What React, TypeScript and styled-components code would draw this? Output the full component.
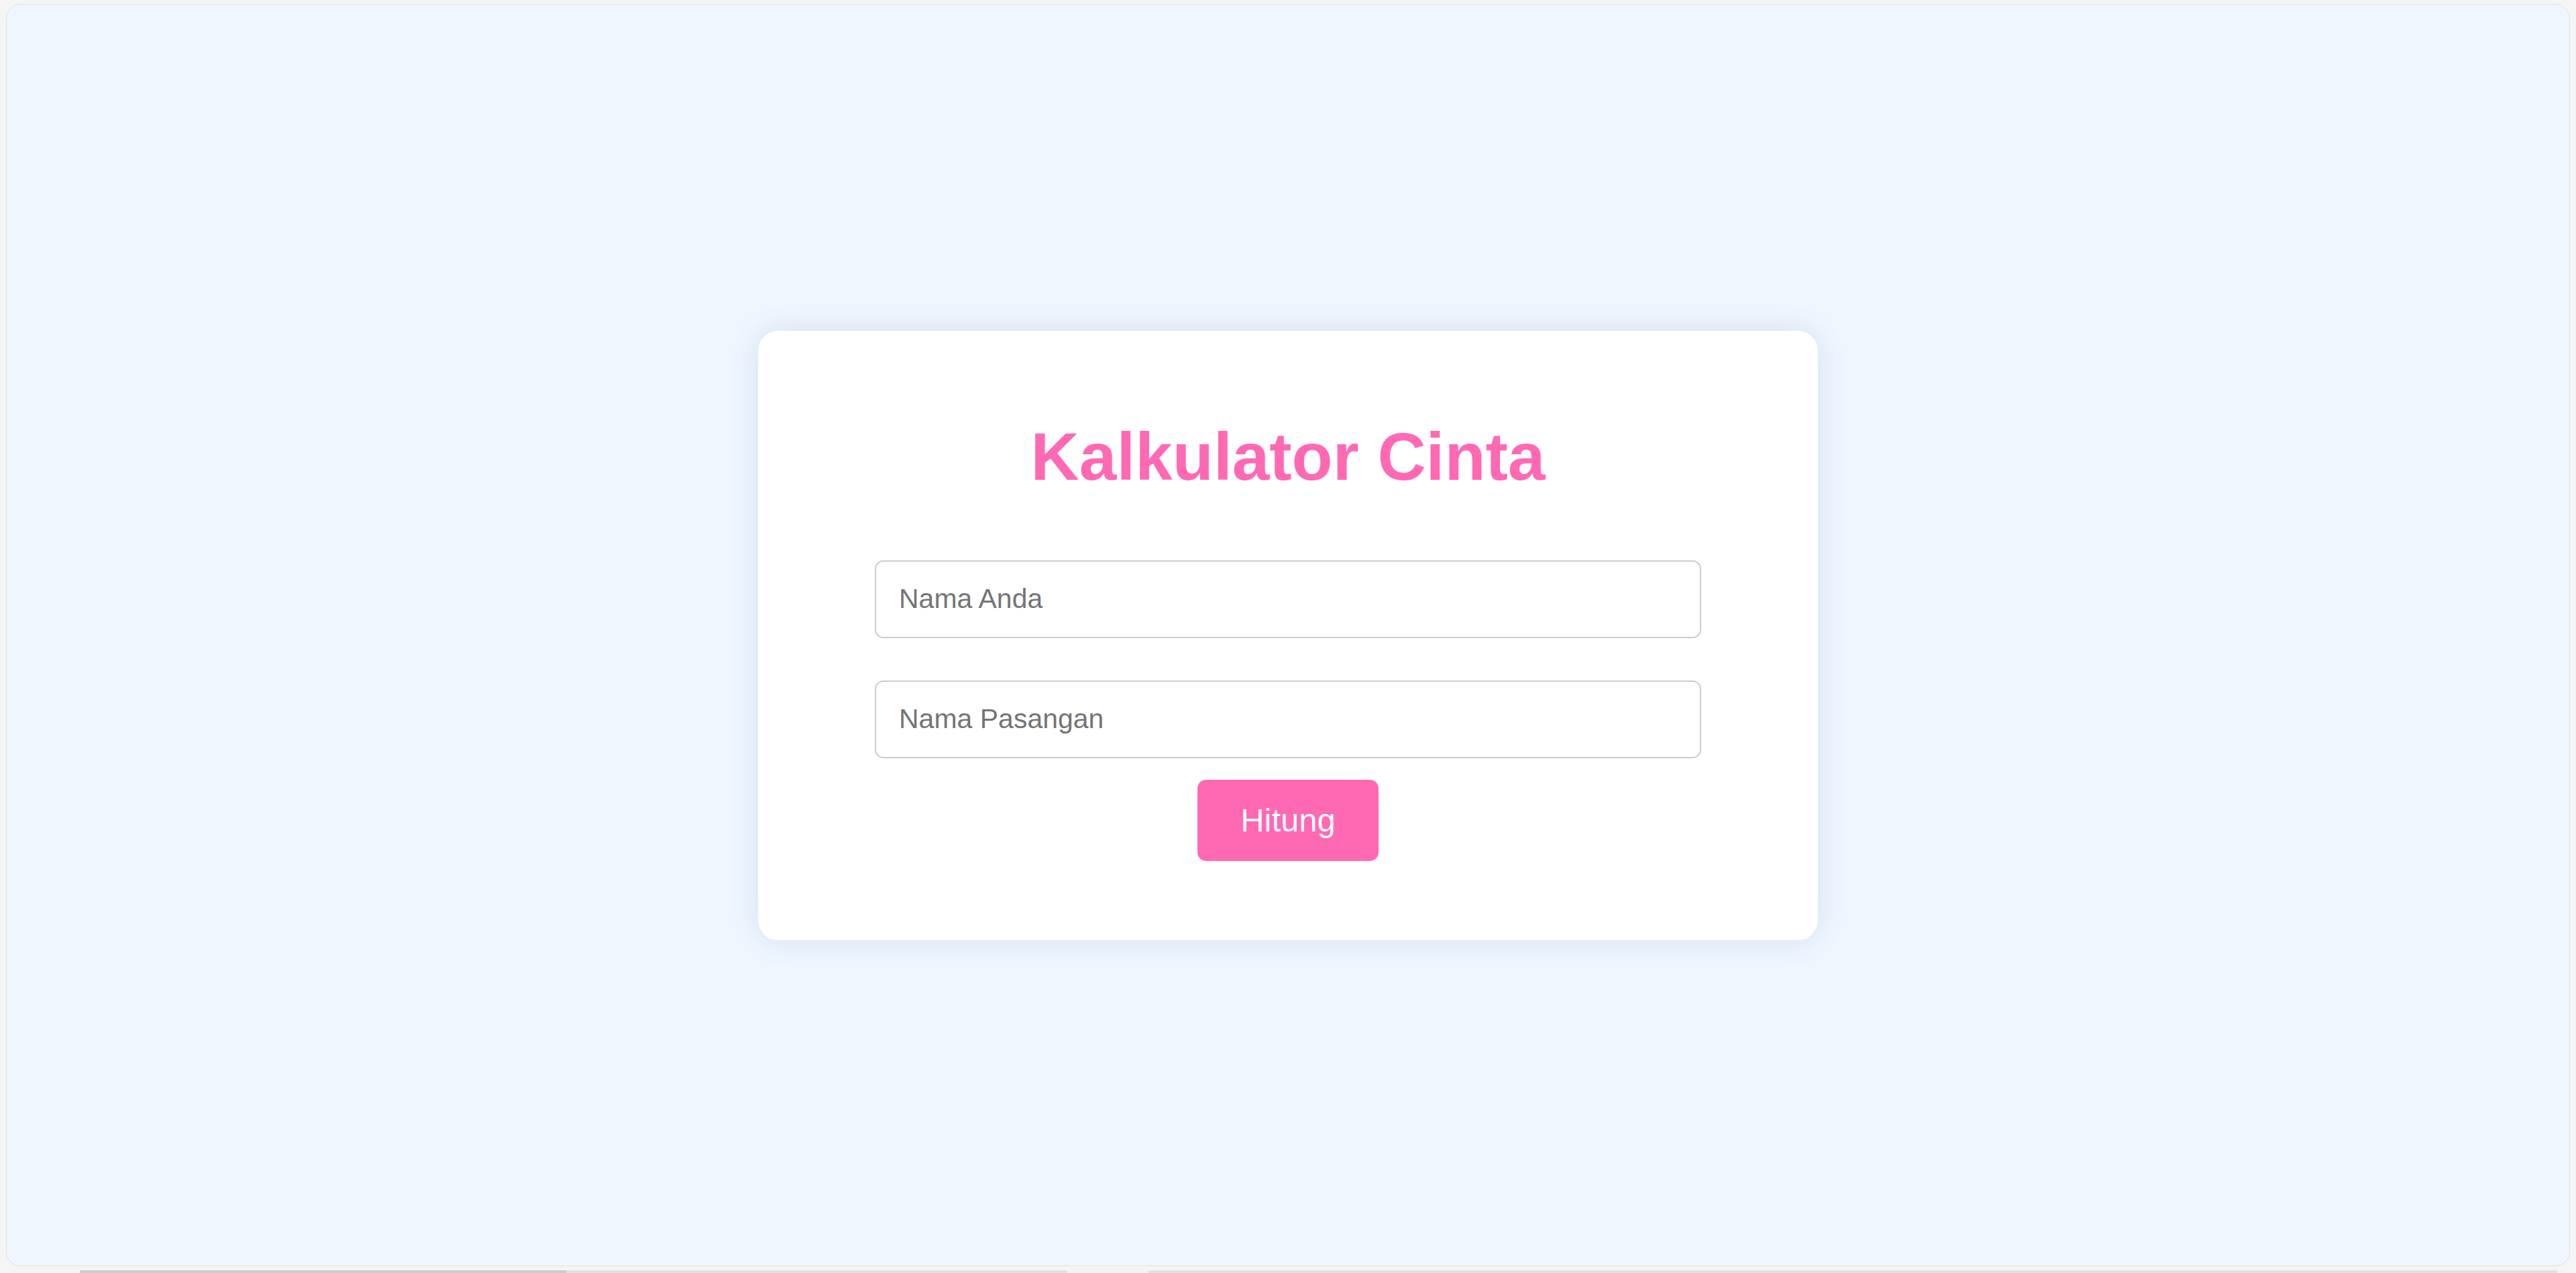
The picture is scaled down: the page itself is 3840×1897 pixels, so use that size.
import React, { useState } from 'react';
import styled, { createGlobalStyle } from 'styled-components';

const GlobalStyle = createGlobalStyle`
  html, body {
    margin: 0;
    padding: 0;
    background: #f5f5f5;
    font-family: Arial, "Liberation Sans", Helvetica, sans-serif;
  }
  * { box-sizing: border-box; }
`;

const Frame = styled.div`
  height: 1897px;
  display: flex;
  flex-direction: column;
  padding: 6px 9px 0 9px;
`;

const Viewport = styled.main`
  flex: 1;
  display: flex;
  align-items: center;
  justify-content: center;
  background: #eff6ff;
  border: 1px solid #e2e2e2;
  border-radius: 22px;
`;

const ScrollTrack = styled.div`
  height: 10px;
  display: flex;
  align-items: flex-end;
  padding-left: 110px;
`;

const ScrollPiece = styled.div<{ $w: number; $tone: string }>`
  width: ${(p) => p.$w}px;
  height: 4px;
  background: ${(p) => p.$tone};
`;

const Card = styled.section`
  width: 1580px;
  background: #ffffff;
  border-radius: 30px;
  padding: 130px 174px 118px;
  box-shadow: 0 0 45px rgba(60, 90, 130, 0.14);
  display: flex;
  flex-direction: column;
  align-items: center;
`;

const Title = styled.h1`
  margin: 0 0 97px;
  font-size: 100px;
  line-height: 115px;
  font-weight: bold;
  color: #ff69b4;
`;

const Form = styled.form`
  width: 100%;
  display: flex;
  flex-direction: column;
  align-items: center;
`;

const Field = styled.input`
  width: 100%;
  height: 116px;
  padding: 0 34px;
  border: 2.5px solid #cccccc;
  border-radius: 13px;
  font-family: Arial, "Liberation Sans", sans-serif;
  font-size: 41px;
  color: #333;
  background: #fff;
  outline: none;

  & + & {
    margin-top: 63px;
  }

  &::placeholder {
    color: #757575;
  }
`;

const Submit = styled.button`
  margin-top: 32px;
  width: 270px;
  height: 121px;
  border: none;
  border-radius: 13px;
  background: #ff69b4;
  color: #ffffff;
  font-family: Arial, "Liberation Sans", sans-serif;
  font-size: 49px;
  cursor: pointer;
`;

export default function App() {
  const [you, setYou] = useState('');
  const [partner, setPartner] = useState('');

  return (
    <>
      <GlobalStyle />
      <Frame>
        <Viewport>
          <Card>
            <Title>Kalkulator Cinta</Title>
            <Form onSubmit={(e) => e.preventDefault()}>
              <Field placeholder="Nama Anda" value={you} onChange={(e) => setYou(e.target.value)} />
              <Field placeholder="Nama Pasangan" value={partner} onChange={(e) => setPartner(e.target.value)} />
              <Submit type="submit">Hitung</Submit>
            </Form>
          </Card>
        </Viewport>
        <ScrollTrack>
          <ScrollPiece $w={725} $tone="#cdcdcd" />
          <ScrollPiece $w={747} $tone="#e2e2e2" />
          <ScrollPiece $w={121} $tone="#f3f3f3" />
          <ScrollPiece $w={2100} $tone="#e2e2e2" />
        </ScrollTrack>
      </Frame>
    </>
  );
}
